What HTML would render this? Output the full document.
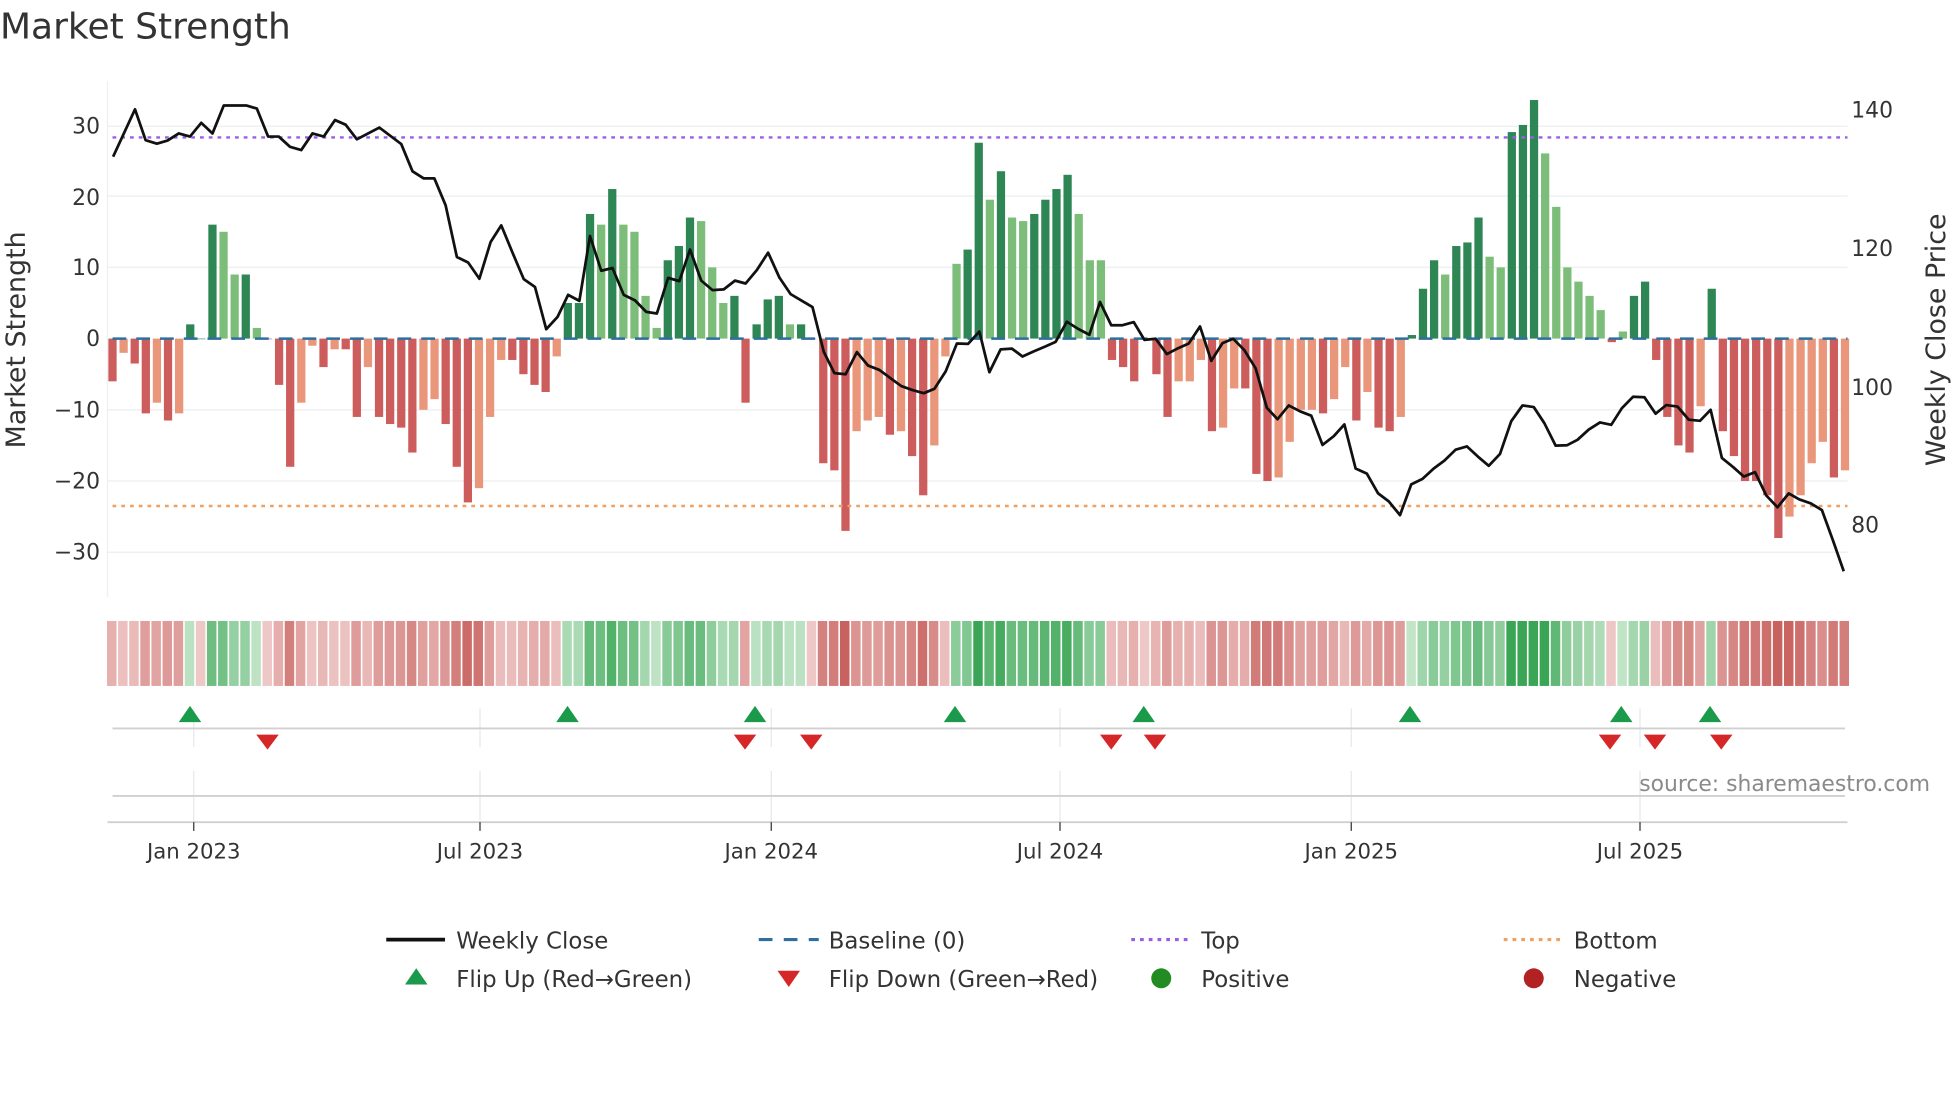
<!DOCTYPE html>
<html><head><meta charset="utf-8"><style>
html,body{margin:0;padding:0;background:#fff;width:1960px;height:1102px;overflow:hidden}
svg{display:block}
text{font-family:"DejaVu Sans","Liberation Sans",sans-serif;fill:#333}
</style></head><body>
<svg id="s" width="1960" height="1102" viewBox="0 0 1568 882" preserveAspectRatio="none" xmlns="http://www.w3.org/2000/svg">
<text x="0" y="31" font-size="28.8" fill="#333">Market Strength</text>
<g stroke="#eef0f3" stroke-width="1.2">
<line x1="86" x2="1478" y1="101" y2="101"/><line x1="86" x2="1478" y1="157" y2="157"/><line x1="86" x2="1478" y1="214" y2="214"/>
<line x1="86" x2="1478" y1="328" y2="328"/><line x1="86" x2="1478" y1="385" y2="385"/><line x1="86" x2="1478" y1="442" y2="442"/>
</g>
<line x1="86" x2="86" y1="65" y2="478" stroke="#eef0f3"/>
<g font-size="17.5" text-anchor="end">
<text x="80" y="107">30</text><text x="80" y="164">20</text><text x="80" y="220">10</text><text x="80" y="277">0</text>
<text x="80" y="334">−10</text><text x="80" y="391">−20</text><text x="80" y="448">−30</text>
</g>
<g font-size="17.5">
<text x="1481" y="94">140</text><text x="1481" y="205">120</text><text x="1481" y="316">100</text><text x="1481" y="426">80</text>
</g>
<text transform="translate(20,272) rotate(-90)" font-size="21.5" text-anchor="middle">Market Strength</text>
<text transform="translate(1556,272) rotate(-90)" font-size="21.5" text-anchor="middle">Weekly Close Price</text>
<g id="bars"></g>
<line x1="90" x2="1478" y1="271" y2="271" stroke="#2f6f9f" stroke-width="2" stroke-dasharray="11,8"/>
<line x1="90" x2="1478" y1="110" y2="110" stroke="#9b5de5" stroke-width="2" stroke-dasharray="3,4"/>
<line x1="90" x2="1478" y1="405" y2="405" stroke="#f0a060" stroke-width="2" stroke-dasharray="3,4"/>
<polyline id="pl" fill="none" stroke="#111" stroke-width="2.2" stroke-linejoin="round"/>
<g id="heat"></g>
<g stroke="#e6e8ec" stroke-width="1">
<line x1="155" x2="155" y1="567" y2="598"/><line x1="384" x2="384" y1="567" y2="598"/><line x1="617" x2="617" y1="567" y2="598"/><line x1="848" x2="848" y1="567" y2="598"/><line x1="1081" x2="1081" y1="567" y2="598"/><line x1="1312" x2="1312" y1="567" y2="598"/>
<line x1="155" x2="155" y1="617" y2="658"/><line x1="384" x2="384" y1="617" y2="658"/><line x1="617" x2="617" y1="617" y2="658"/><line x1="848" x2="848" y1="617" y2="658"/><line x1="1081" x2="1081" y1="617" y2="658"/><line x1="1312" x2="1312" y1="617" y2="658"/>
</g>
<line x1="90" x2="1476" y1="583" y2="583" stroke="#d0d0d0" stroke-width="1.5"/>
<line x1="90" x2="1476" y1="637" y2="637" stroke="#d0d0d0" stroke-width="1.5"/>
<line x1="86" x2="1478" y1="658" y2="658" stroke="#d0d0d0" stroke-width="1.5"/>
<g id="mk"></g>
<text x="1544" y="633" font-size="17.5" text-anchor="end" style="fill:#8a8a8a">source: sharemaestro.com</text>
<g stroke="#333" stroke-width="1"><line x1="155" x2="155" y1="658" y2="665"/><line x1="384" x2="384" y1="658" y2="665"/><line x1="617" x2="617" y1="658" y2="665"/><line x1="848" x2="848" y1="658" y2="665"/><line x1="1081" x2="1081" y1="658" y2="665"/><line x1="1312" x2="1312" y1="658" y2="665"/></g>
<g font-size="17" text-anchor="middle">
<text x="155" y="687">Jan 2023</text><text x="384" y="687">Jul 2023</text><text x="617" y="687">Jan 2024</text><text x="848" y="687">Jul 2024</text><text x="1081" y="687">Jan 2025</text><text x="1312" y="687">Jul 2025</text>
</g>
<g font-size="18.3">
<line x1="309" x2="356" y1="752" y2="752" stroke="#111" stroke-width="3"/><text x="365" y="759">Weekly Close</text>
<line x1="607" x2="655" y1="752" y2="752" stroke="#2f6f9f" stroke-width="2.5" stroke-dasharray="11,9"/><text x="663" y="759">Baseline (0)</text>
<line x1="905" x2="951" y1="752" y2="752" stroke="#9b5de5" stroke-width="2.5" stroke-dasharray="3,4"/><text x="961" y="759">Top</text>
<line x1="1203" x2="1249" y1="752" y2="752" stroke="#f0a060" stroke-width="2.5" stroke-dasharray="3,4"/><text x="1259" y="759">Bottom</text>
<polygon points="333,775 324,788 342,788" fill="#1a9a4a"/><text x="365" y="790">Flip Up (Red→Green)</text>
<polygon points="622,777 640,777 631,790" fill="#d62728"/><text x="663" y="790">Flip Down (Green→Red)</text>
<circle cx="929" cy="783" r="8" fill="#228b22"/><text x="961" y="790">Positive</text>
<circle cx="1227" cy="783" r="8" fill="#b22222"/><text x="1259" y="790">Negative</text>
</g>
</svg>
<script>
var NS="http://www.w3.org/2000/svg";
var data=("-6R -2S -3.5R -10.5R -9S -11.5R -10.5S 2D 0D 16D 15L 9L 9D 1.5L 0R -6.5R -18R -9S -1S -4R -1.5S -1.5R -11R -4S -11R -12R -12.5R -16R -10S -8.5S -12R -18R -23R -21S -11S -3S -3R -5R -6.5R -7.5R -2.5S 5D 5D 17.5D 16L 21D 16L 15L 6L 1.5L 11D 13D 17D 16.5L 10L 5L 6D -9R 2D 5.5D 6D 2L 2D 0R -17.5R -18.5R -27R -13S -11.5S -11S -13.5R -13S -16.5R -22R -15S -2.5S 10.5L 12.5D 27.5D "+
"19.5L 23.5D 17L 16.5L 17.5D 19.5D 21D 23D 17.5L 11L 11L -3R -4R -6R 0R -5R -11R -6S -6S -3S -13R -12.5S -7S -7R -19R -20R -19.5S -14.5S -10S -10S -10.5R -8.5S -4S -11.5R -7.5S -12.5R -13R -11S 0.5D 7D 11D 9L 13D 13.5D 17D 11.5L 10L 29D 30D 33.5D 26L 18.5L 10L 8L 6L 4L -0.5R 1L 6D 8D -3R -11R -15R -16R -9.5S 7D -13R -16.5R -20R -20R -22R -28R -25S -22S -17.5S -14.5S -19.5R -18.5S").trim().split(/\s+/);
var col={D:"#2e8655",L:"#7dbd7a",R:"#cd5c5c",S:"#e9967a"};
var bars=document.getElementById("bars"),heat=document.getElementById("heat");
function mix(a,b,t){return "rgb("+[0,1,2].map(function(i){return Math.round(a[i]+(b[i]-a[i])*t)}).join(",")+")";}
var step=(1476-90)/(data.length-1);
for(var i=0;i<data.length;i++){
 var t=data[i].slice(-1),v=parseFloat(data[i]);
 var x=90+i*step;
 var y0=271,y1=271-v*5.7;
 var r=document.createElementNS(NS,"rect");
 r.setAttribute("x",x-3.3);r.setAttribute("width",6.6);
 r.setAttribute("y",Math.min(y0,y1));r.setAttribute("height",Math.max(Math.abs(y1-y0),0.5));
 r.setAttribute("fill",col[t]);bars.appendChild(r);
 var h=document.createElementNS(NS,"rect");
 h.setAttribute("x",x-4.4);h.setAttribute("width",7.6);h.setAttribute("y",497);h.setAttribute("height",52);
 var k=Math.min(1,0.2+Math.abs(v)/32);
 h.setAttribute("fill",v>0?mix([232,246,232],[58,166,85],k):mix([248,225,225],[200,98,94],k));
 heat.appendChild(h);
}
var YS=3.165;
var z1=[181,397,216,277,233,355,251,364,268,356,286,338,304,346,322,311,340,338,358,267,394,267,411,275,429,346,446,346,464,372,482,380,500,338,518,346,536,304,553,316,571,353,607,323,642,365,660,434,678,452,695,452,713,520,731,651,749,665,767,706,785,613,802,571,820,640,838,707,856,727,874,834,892,803,909,747,927,762,944,598,962,686,980,679,998,747,1016,761,1034,790,1051,794,1069,704,1087,712,1104,632,1122,711,1140,735,1158,733,1176,711,1193,718,1211,684,1229,640,1247,703,1265,745,1283,762,1300,778,1318,891,1335,945,1353,948,1371,892,1389,926,1407,937,1424,957,1442,978,1460,988,1478,996,1495,985,1513,941,1531,870,1549,871,1567,840];
var z2=[15,943,33,885,51,883,68,903,86,890,104,878,121,866,139,815,157,833,175,848,192,765,210,824,228,824,246,816,263,861,281,858,299,897,317,882,334,870,352,827,370,914,388,869,405,858,423,887,441,933,459,1033,476,1062,494,1027,512,1042,530,1053,548,1127,566,1105,583,1075,601,1187,619,1200,637,1250,654,1270,672,1305,690,1227,708,1213,726,1187,743,1167,761,1139,779,1131,797,1157,814,1180,832,1150,850,1067,868,1027,886,1031,903,1072,921,1129,939,1128,956,1114,974,1088,992,1070,1010,1076,1027,1034,1045,1005,1063,1006,1081,1048,1098,1026,1116,1030,1134,1063,1152,1066,1169,1038,1187,1160,1205,1183,1222,1207,1240,1196,1258,1255,1276,1285,1294,1250,1311,1265,1329,1275,1347,1292,1365,1370,1382,1447];
var pts=[];
for(var i=0;i<z1.length;i+=2)pts.push((z1[i]/2).toFixed(1)+","+(z1[i+1]/YS).toFixed(1));
for(var i=0;i<z2.length;i+=2)pts.push((z2[i]/2+784).toFixed(1)+","+(z2[i+1]/YS).toFixed(1));
document.getElementById("pl").setAttribute("points",pts.join(" "));
var mk=document.getElementById("mk"),ups=[152,454,604,764,915,1128,1297,1368],dns=[214,596,649,889,924,1288,1324,1377];
ups.forEach(function(x){var p=document.createElementNS(NS,"polygon");p.setAttribute("points",x+",565 "+(x-9)+",578 "+(x+9)+",578");p.setAttribute("fill","#1a9a4a");mk.appendChild(p);});
dns.forEach(function(x){var p=document.createElementNS(NS,"polygon");p.setAttribute("points",(x-9)+",588 "+(x+9)+",588 "+x+",600");p.setAttribute("fill","#d62728");mk.appendChild(p);});
</script>
</body></html>
